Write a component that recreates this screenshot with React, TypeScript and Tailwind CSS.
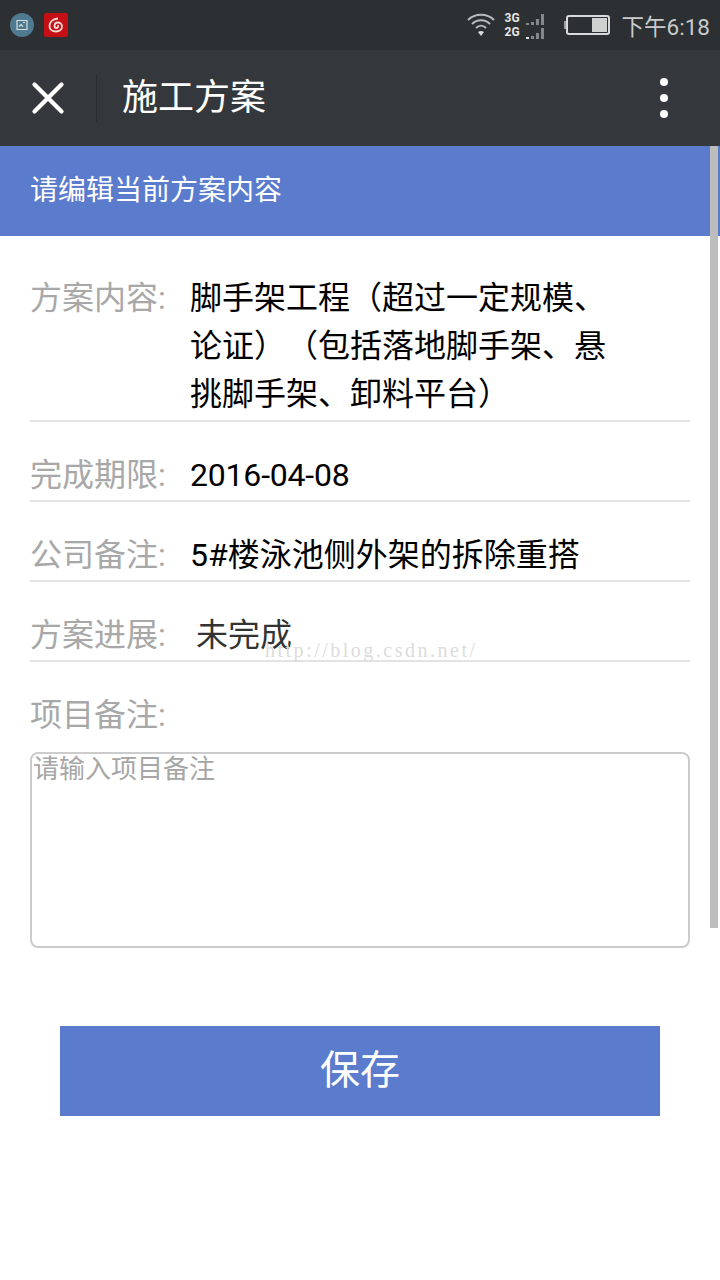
import { X } from "lucide-react";

const FONT = "font-['Roboto','Noto_Sans_CJK_SC',sans-serif]";

function WifiIcon() {
    return (
        <svg width="30" height="26" viewBox="0 0 30 26" fill="none" stroke="#b9bcbe" strokeWidth="2">
            <path d="M2 8 C9 1 21 1 28 8" />
            <path d="M6 12 C11 7 19 7 24 12" />
            <path d="M10 16 C13 13 17 13 20 16" />
            <path d="M15 24 L12 20 C14 18.600 16 18.600 18 20 Z" fill="#d8dadb" stroke="none" />
        </svg>
    );
}

function SignalRow({ label, dots }: { label: string; dots: number }) {
    const bars = [2, 3, 6, 11];
    return (
        <div className="flex items-end h-[13px]">
            <span className="w-[17px] text-[12px] leading-[13px] font-bold text-[#e4e5e6]">{label}</span>
            <div className="flex items-end gap-[2px] ml-[4px] h-[12px]">
                {bars.map((h, i) => (
                    <div
                        key={i}
                        className={i < dots ? "w-[3px] bg-[#e0e1e2]" : "w-[3px] bg-[#85888a]"}
                        style={{ height: h }}
                    />
                ))}
            </div>
        </div>
    );
}

function BatteryIcon() {
    return (
        <div className="flex items-center">
            <div className="w-[2px] h-[8px] bg-[#9a9c9e]" />
            <div className="w-[44px] h-[20px] rounded-[3px] border-2 border-[#d8d9da] flex justify-end pr-[1px] py-[1px]">
                <div className="w-[15px] bg-[#cfd0d0]" />
            </div>
        </div>
    );
}

function StatusBar() {
    return (
        <div className="h-[50px] bg-[#2d3033] flex items-center pl-[10px] pr-[10px]">
            <div className="w-6 h-6 rounded-full bg-[#4f7a8f] flex items-center justify-center">
                <svg width="12" height="12" viewBox="0 0 12 12" fill="none" stroke="#d6e0e4" strokeWidth="1.200">
                    <path d="M1 1.500 H11 V10.500 H1 Z" />
                    <path d="M3 7.500 L5 5.500 L7 7.500 M7 3.500 H9" />
                </svg>
            </div>
            <div className="w-6 h-6 ml-[10px] bg-[#c40f14] flex items-center justify-center rounded-[2px]">
                <svg width="16" height="16" viewBox="0 0 16 16" fill="none" stroke="#f7dcd8" strokeWidth="1.800">
                    <path d="M10 1.500 C5 2 1.500 5 1.500 9 C1.500 12.500 4.500 14.500 8 14.500 C11.500 14.500 14 12.500 14 9.500 C14 7 12 5.500 10 5.500 C8 5.500 6.500 7 6.500 9 C6.500 10.500 7.500 11 8.500 11 C10 11 10.500 9.500 10 8" />
                </svg>
            </div>
            <div className="ml-auto flex items-center">
                <WifiIcon />
                <div className="ml-[9px] flex flex-col gap-[1px]">
                    <SignalRow label="3G" dots={0} />
                    <SignalRow label="2G" dots={1} />
                </div>
                <div className="ml-[20px]">
                    <BatteryIcon />
                </div>
                <span className="ml-[12px] mt-[3px] text-[22.500px] leading-[30px] text-[#c9cbcc]">下午6:18</span>
            </div>
        </div>
    );
}

function AppBar() {
    return (
        <div className="h-[96px] bg-[#34383c] flex items-center">
            <div className="w-[97px] h-[48px] border-r border-[#2b2e31] flex items-center pl-[21px]">
                <X size={54} color="#ffffff" strokeWidth={1.900} />
            </div>
            <h1 className="ml-[25px] text-[36px] leading-[48px] text-white">施工方案</h1>
            <div className="ml-auto mr-[52px] flex flex-col gap-[8px]">
                <div className="w-2 h-2 rounded-full bg-white" />
                <div className="w-2 h-2 rounded-full bg-white" />
                <div className="w-2 h-2 rounded-full bg-white" />
            </div>
        </div>
    );
}

function Row({ label, value, tone }: { label: string; value: string; tone?: string }) {
    return (
        <div className="flex h-[80px] pt-[29px] border-b-2 border-[#e3e3e3]">
            <span className="w-[160px] shrink-0 text-[32px] leading-[48px] text-[#a8a8a8]">{label}</span>
            <span className={`text-[32px] leading-[48px] ${tone ?? "text-black"}`}>{value}</span>
        </div>
    );
}

export default function App() {
    return (
        <div className={`relative w-[720px] h-[1280px] overflow-hidden bg-white ${FONT}`}>
            <StatusBar />
            <AppBar />
            <div className="h-[90px] bg-[#5b7bcd] flex items-center pl-[30px] text-[28px] text-white">
                请编辑当前方案内容
            </div>

            <div className="px-[30px]">
                {/* first row wraps to three lines */}
                <div className="flex pt-[38px] pb-[2px] border-b-2 border-[#e3e3e3]">
                    <span className="w-[160px] shrink-0 text-[32px] leading-[48px] text-[#a8a8a8]">方案内容:</span>
                    <span className="w-[420px] text-[32px] leading-[48px] text-black [text-spacing-trim:space-all]">
                        脚手架工程（超过一定规模、论证）（包括落地脚手架、悬挑脚手架、卸料平台）
                    </span>
                </div>
                <Row label="完成期限:" value="2016-04-08" tone="text-black tracking-[-0.200px]" />
                <Row label="公司备注:" value="5#楼泳池侧外架的拆除重搭" />
                <Row label="方案进展:" value=" 未完成" tone="text-[#333333] pl-[6px]" />

                <div className="pt-[29px] text-[32px] leading-[48px] text-[#a8a8a8]">项目备注:</div>
                <textarea
                    placeholder="请输入项目备注"
                    className="block mt-[13px] w-[660px] h-[196px] resize-none rounded-[8px] border-2 border-[#cccccc] px-[1px] py-0 text-[26px] leading-[30px] outline-none placeholder:text-[#a6a6a6]"
                />
                <button className="block mx-auto mt-[78px] w-[600px] h-[90px] bg-[#5b7bcd] text-[40px] text-white">
                    保存
                </button>
            </div>

            {/* scrollbar */}
            <div className="absolute left-[710px] top-[146px] w-[8px] h-[782px] bg-[#bdbdbd]" />
            {/* watermark */}
            <div className="absolute left-[265px] top-[638px] font-['Liberation_Serif',serif] text-[20px] leading-[24px] tracking-[2.500px] text-[#dcdcdc]">
                http://blog.csdn.net/
            </div>
        </div>
    );
}
